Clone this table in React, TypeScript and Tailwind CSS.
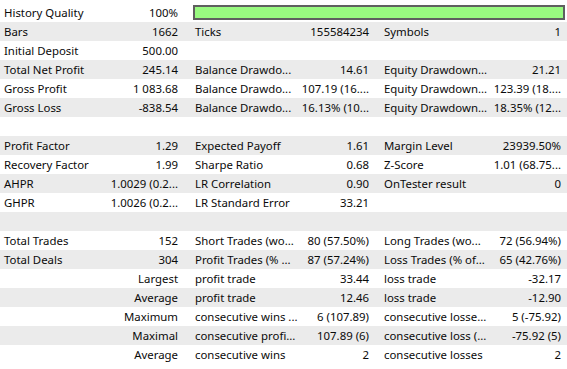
type Row = string[] | null

const ROWS: Row[] = [
  ['History Quality', '100%'],
  ['Bars', '1662', 'Ticks', '155584234', 'Symbols', '1'],
  ['Initial Deposit', '500.00', '', '', '', ''],
  ['Total Net Profit', '245.14', 'Balance Drawdo...', '14.61', 'Equity Drawdown...', '21.21'],
  ['Gross Profit', '1 083.68', 'Balance Drawdo...', '107.19 (16....', 'Equity Drawdown...', '123.39 (18....'],
  ['Gross Loss', '-838.54', 'Balance Drawdo...', '16.13% (10...', 'Equity Drawdown...', '18.35% (12...'],
  null,
  ['Profit Factor', '1.29', 'Expected Payoff', '1.61', 'Margin Level', '23939.50%'],
  ['Recovery Factor', '1.99', 'Sharpe Ratio', '0.68', 'Z-Score', '1.01 (68.75...'],
  ['AHPR', '1.0029 (0.2...', 'LR Correlation', '0.90', 'OnTester result', '0'],
  ['GHPR', '1.0026 (0.2...', 'LR Standard Error', '33.21', '', ''],
  null,
  ['Total Trades', '152', 'Short Trades (wo...', '80 (57.50%)', 'Long Trades (wo...', '72 (56.94%)'],
  ['Total Deals', '304', 'Profit Trades (% ...', '87 (57.24%)', 'Loss Trades (% of...', '65 (42.76%)'],
  ['', 'Largest', 'profit trade', '33.44', 'loss trade', '-32.17'],
  ['', 'Average', 'profit trade', '12.46', 'loss trade', '-12.90'],
  ['', 'Maximum', 'consecutive wins ...', '6 (107.89)', 'consecutive losse...', '5 (-75.92)'],
  ['', 'Maximal', 'consecutive profi...', '107.89 (6)', 'consecutive loss (...', '-75.92 (5)'],
  ['', 'Average', 'consecutive wins', '2', 'consecutive losses', '2'],
]

function Pair({ label, value, cls }: { label: string; value: string; cls: string }) {
  return (
    <div className={`flex w-[189px] shrink-0 items-center justify-between whitespace-nowrap ${cls}`}>
      <span>{label}</span>
      <span>{value}</span>
    </div>
  )
}

export default function App() {
  return (
    <div
      className="h-[369px] w-[567px] overflow-hidden bg-white pt-[3px] text-[11.4px] text-[#0a0a0a]"
      style={{ fontFamily: '"Noto Sans", "Open Sans", sans-serif' }}
    >
      {ROWS.map((row, i) => (
        <div key={i} className={`flex h-[19px] items-center ${i % 2 === 1 ? 'bg-[#ebebeb]' : 'bg-white'}`}>
          {row && (
            <>
              <Pair label={row[0]} value={row[1]} cls="pl-[4px] pr-[11px]" />
              {row.length === 2 ? (
                // quality bar over the two right columns
                <div className="ml-[4px] mr-[2px] h-[15px] flex-1 border-2 border-[#5f5f5f] bg-[#99fa80]" />
              ) : (
                <>
                  <Pair label={row[2]} value={row[3]} cls="pl-[6px] pr-[9px]" />
                  <Pair label={row[4]} value={row[5]} cls="pl-[6px] pr-[6px]" />
                </>
              )}
            </>
          )}
        </div>
      ))}
    </div>
  )
}
